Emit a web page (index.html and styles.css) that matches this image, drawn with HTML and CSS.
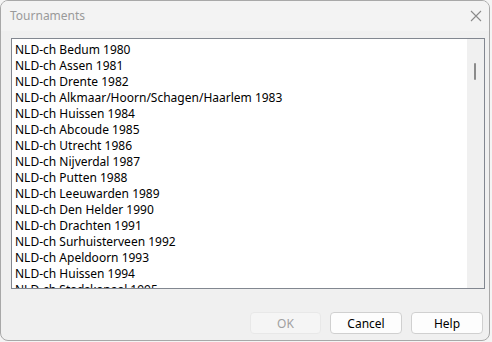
FILE: index.html
```html
<!DOCTYPE html>
<html>
<head>
<meta charset="utf-8">
<link rel="stylesheet" href="styles.css">
</head>
<body>
<div class="window">
  <div class="titlebar">
    <span class="title">Tournaments</span>
    <svg class="close" width="12" height="12" viewBox="0 0 12 12"><path d="M1 1 L11 11 M11 1 L1 11" stroke="#8a8a8a" stroke-width="1.1" fill="none"/></svg>
  </div>
  <div class="body">
    <div class="listbox">
      <div class="items">
        <div class="item">NLD-ch Bedum 1980</div>
        <div class="item">NLD-ch Assen 1981</div>
        <div class="item">NLD-ch Drente 1982</div>
        <div class="item">NLD-ch Alkmaar/Hoorn/Schagen/Haarlem 1983</div>
        <div class="item">NLD-ch Huissen 1984</div>
        <div class="item">NLD-ch Abcoude 1985</div>
        <div class="item">NLD-ch Utrecht 1986</div>
        <div class="item">NLD-ch Nijverdal 1987</div>
        <div class="item">NLD-ch Putten 1988</div>
        <div class="item">NLD-ch Leeuwarden 1989</div>
        <div class="item">NLD-ch Den Helder 1990</div>
        <div class="item">NLD-ch Drachten 1991</div>
        <div class="item">NLD-ch Surhuisterveen 1992</div>
        <div class="item">NLD-ch Apeldoorn 1993</div>
        <div class="item">NLD-ch Huissen 1994</div>
        <div class="item">NLD-ch Stadskanaal 1995</div>
      </div>
      <div class="scrollbar"><div class="thumb"></div></div>
    </div>
    <div class="buttons">
      <button class="btn disabled">OK</button>
      <button class="btn">Cancel</button>
      <button class="btn">Help</button>
    </div>
  </div>
</div>
</body>
</html>
```
FILE: styles.css
```css
html, body {
  margin: 0;
  padding: 0;
  background: #f4f4f4;
}
body {
  font-family: "Noto Sans", "Open Sans", sans-serif;
  font-size: 12px;
}
.window {
  width: 490px;
  height: 341px;
  box-sizing: border-box;
  border: 1px solid #a8a8a8;
  border-radius: 8px;
  background: #f0f0f0;
  overflow: hidden;
  display: flex;
  flex-direction: column;
}
.titlebar {
  height: 30px;
  background: #f3f3f3;
  display: flex;
  align-items: center;
  justify-content: space-between;
  padding: 0 7px 0 9px;
  flex: none;
}
.title {
  color: #9a9a9a;
  font-size: 12px;
  margin-top: -1px;
}
.close {
  margin-top: -1px;
}
.body {
  display: flex;
  flex-direction: column;
  padding: 7px 4px 0 10px;
}
.listbox {
  height: 251px;
  box-sizing: border-box;
  border: 1px solid #828790;
  background: #fff;
  display: flex;
  overflow: hidden;
}
.items {
  flex: 1;
  padding: 3px 0 0 3px;
}
.item {
  height: 16px;
  line-height: 16px;
  color: #000;
  white-space: nowrap;
}
.scrollbar {
  width: 17px;
  background: #f0f0f0;
  flex: none;
  position: relative;
}
.thumb {
  position: absolute;
  left: 7px;
  top: 24px;
  width: 2px;
  height: 17px;
  background: #8b8b8b;
  border-radius: 1px;
}
.buttons {
  display: flex;
  justify-content: flex-end;
  gap: 9px;
  margin-top: 23px;
  padding-right: 2px;
}
.btn {
  width: 72px;
  height: 22px;
  box-sizing: border-box;
  border: 1px solid #d0d0d0;
  border-radius: 4px;
  background: #fdfdfd;
  font-family: "Noto Sans", "Open Sans", sans-serif;
  font-size: 12px;
  color: #000;
  padding: 0;
}
.btn.disabled {
  width: 71px;
  background: #f5f5f5;
  border-color: #e8e8e8;
  color: #a0a0a0;
}
```
